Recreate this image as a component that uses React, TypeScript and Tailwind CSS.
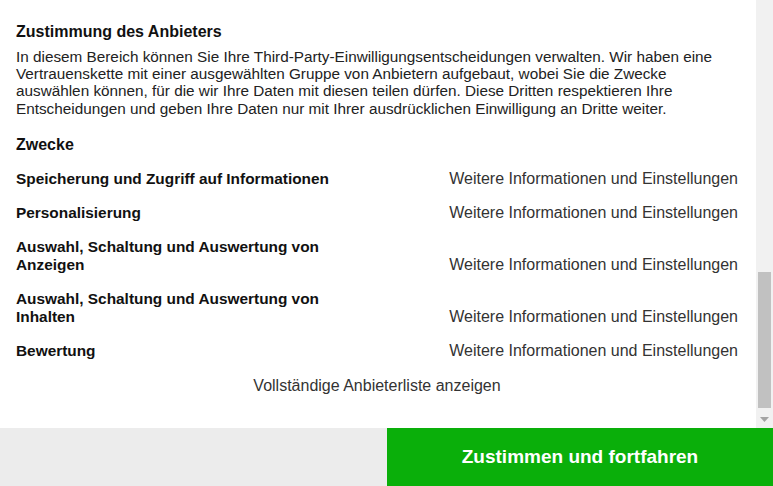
const purposes = [
  "Speicherung und Zugriff auf Informationen",
  "Personalisierung",
  "Auswahl, Schaltung und Auswertung von Anzeigen",
  "Auswahl, Schaltung und Auswertung von Inhalten",
  "Bewertung",
];

export default function App() {
  return (
    <div className="flex h-[486px] w-[773px] flex-col bg-white font-['Liberation_Sans',Arial,sans-serif]">
      {/* Scrollable area (shown scrolled to bottom) */}
      <div className="flex h-[428px]">
        <div className="flex-1 overflow-hidden pl-4 pr-[18px] pt-[22px]">
          <h2 className="text-[16px] font-bold leading-[20px] text-[#111]">
            Zustimmung des Anbieters
          </h2>
          <p className="mt-[5.5px] whitespace-nowrap text-[15.3px] leading-[17.4px] text-[#222]">
            In diesem Bereich können Sie Ihre Third-Party-Einwilligungsentscheidungen verwalten. Wir haben eine
            <br />
            Vertrauenskette mit einer ausgewählten Gruppe von Anbietern aufgebaut, wobei Sie die Zwecke
            <br />
            auswählen können, für die wir Ihre Daten mit diesen teilen dürfen. Diese Dritten respektieren Ihre
            <br />
            Entscheidungen und geben Ihre Daten nur mit Ihrer ausdrücklichen Einwilligung an Dritte weiter.
          </p>

          <h3 className="mt-[18.5px] text-[16px] font-bold leading-[18px] text-[#111]">Zwecke</h3>

          <div className="mt-[16px] flex flex-col gap-4">
            {purposes.map((p) => (
              <div key={p} className="flex items-end justify-between">
                <span className="w-[330px] text-[15.4px] font-bold leading-[18px] text-[#111]">{p}</span>
                <a className="text-[16px] leading-[18px] text-[#333]">
                  Weitere Informationen und Einstellungen
                </a>
              </div>
            ))}
          </div>

          <div className="mt-[17px] text-center text-[16px] leading-[18px] text-[#333]">
            Vollständige Anbieterliste anzeigen
          </div>
        </div>

        {/* Scrollbar */}
        <div className="flex w-[17px] flex-col bg-[#f1f1f1]">
          <div className="h-[17px]" />
          <div className="flex flex-1 flex-col justify-end px-[2px] pb-[3px]">
            <div className="h-[136px] bg-[#c1c1c1]" />
          </div>
          <div className="flex h-[17px] items-center justify-center">
            <svg width="9" height="6" viewBox="0 0 9 6">
              <path d="M0 0h9L4.5 5z" fill="#a3a3a3" />
            </svg>
          </div>
        </div>
      </div>

      {/* Footer */}
      <div className="flex h-[58px]">
        <div className="flex-1 bg-[#ececec]" />
        <button className="flex w-[386px] items-center justify-center bg-[#0aaf0a] text-[19px] font-bold text-white">
          Zustimmen und fortfahren
        </button>
      </div>
    </div>
  );
}
